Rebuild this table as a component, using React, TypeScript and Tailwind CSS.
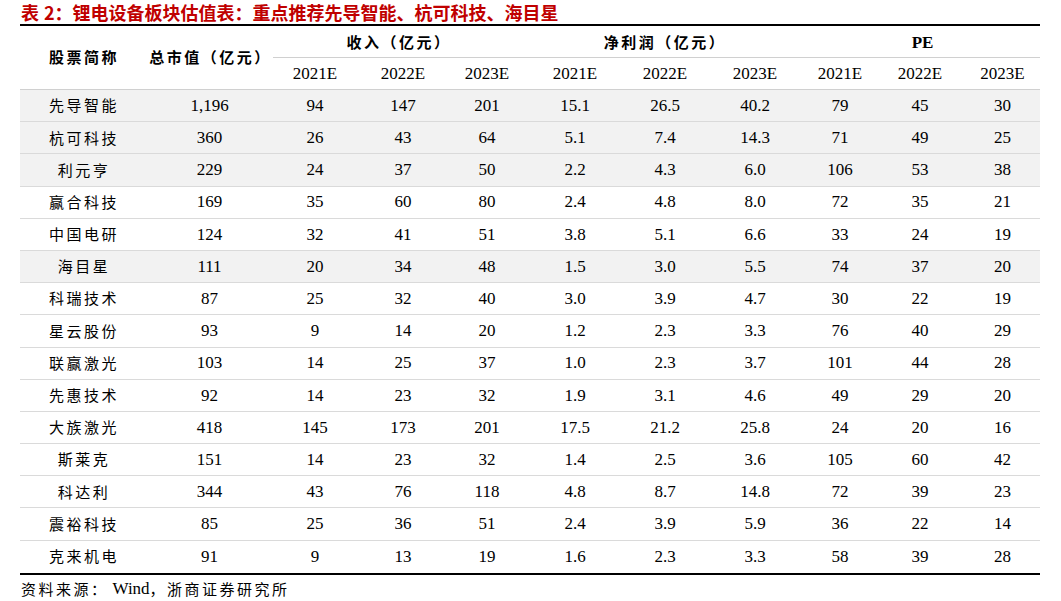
import React from "react";

const rows: string[][] = [
  ["先导智能", "1,196", "94", "147", "201", "15.1", "26.5", "40.2", "79", "45", "30"],
  ["杭可科技", "360", "26", "43", "64", "5.1", "7.4", "14.3", "71", "49", "25"],
  ["利元亨", "229", "24", "37", "50", "2.2", "4.3", "6.0", "106", "53", "38"],
  ["赢合科技", "169", "35", "60", "80", "2.4", "4.8", "8.0", "72", "35", "21"],
  ["中国电研", "124", "32", "41", "51", "3.8", "5.1", "6.6", "33", "24", "19"],
  ["海目星", "111", "20", "34", "48", "1.5", "3.0", "5.5", "74", "37", "20"],
  ["科瑞技术", "87", "25", "32", "40", "3.0", "3.9", "4.7", "30", "22", "19"],
  ["星云股份", "93", "9", "14", "20", "1.2", "2.3", "3.3", "76", "40", "29"],
  ["联赢激光", "103", "14", "25", "37", "1.0", "2.3", "3.7", "101", "44", "28"],
  ["先惠技术", "92", "14", "23", "32", "1.9", "3.1", "4.6", "49", "29", "20"],
  ["大族激光", "418", "145", "173", "201", "17.5", "21.2", "25.8", "24", "20", "16"],
  ["斯莱克", "151", "14", "23", "32", "1.4", "2.5", "3.6", "105", "60", "42"],
  ["科达利", "344", "43", "76", "118", "4.8", "8.7", "14.8", "72", "39", "23"],
  ["震裕科技", "85", "25", "36", "51", "2.4", "3.9", "5.9", "36", "22", "14"],
  ["克来机电", "91", "9", "13", "19", "1.6", "2.3", "3.3", "58", "39", "28"],
];

const highlighted = new Set([0, 1, 2, 5]);

const cjk = "font-['Noto_Sans_CJK_SC',sans-serif]";
const serif = "font-['Liberation_Serif','Noto_Sans_CJK_SC',serif]";
const cols =
  "grid grid-cols-[126px_127px_84px_92px_76px_100px_80px_100px_70px_90px_75px]";

export default function App() {
  return (
    <div className="w-[1061px] h-[601px] bg-white text-black overflow-hidden">
      <div
        className={`h-[24px] pl-[21px] flex items-center text-[18px] font-bold leading-none text-[#c00000] ${cjk}`}
      >
        表<span className="inline-block w-[5px]" />2：锂电设备板块估值表：重点推荐先导智能、杭可科技、海目星
      </div>
      <div className="ml-[20px] w-[1020px]">
        {/* header */}
        <div
          className={`${cols} grid-rows-[32px_31px] border-t-2 border-black border-b border-b-[#d0d0d0]`}
        >
          <div
            className={`row-span-2 flex items-center justify-center text-[15px] font-semibold tracking-[2.5px] pl-[2px] ${cjk}`}
          >
            股票简称
          </div>
          <div
            className={`row-span-2 flex items-center justify-center text-[15px] font-semibold tracking-[2.5px] pl-[2px] ${cjk}`}
          >
            总市值（亿元）
          </div>
          <div
            className={`col-span-3 flex items-center justify-center border-b border-[#d0d0d0] text-[15px] font-semibold tracking-[2.5px] pt-[2px] ${cjk}`}
          >
            收入（亿元）
          </div>
          <div
            className={`col-span-3 flex items-center justify-center border-b border-[#d0d0d0] text-[15px] font-semibold tracking-[2.5px] pt-[2px] ${cjk}`}
          >
            净利润（亿元）
          </div>
          <div
            className={`col-span-3 flex items-center justify-center border-b border-[#d0d0d0] text-[17px] font-bold pt-[2px] ${serif}`}
          >
            PE
          </div>
          {["2021E", "2022E", "2023E", "2021E", "2022E", "2023E", "2021E", "2022E", "2023E"].map(
            (y, i) => (
              <div
                key={i}
                className={`flex items-center justify-center pt-[1px] text-[17px] ${serif}`}
              >
                {y}
              </div>
            )
          )}
        </div>
        {/* body */}
        <div className="border-b-2 border-black">
          {rows.map((r, ri) => (
            <div
              key={ri}
              className={`${cols} h-[32.2px] ${
                ri < rows.length - 1 ? "border-b border-[#dadada]" : ""
              } ${highlighted.has(ri) ? "bg-[#f2f2f2]" : "bg-white"}`}
            >
              {r.map((c, ci) => (
                <div
                  key={ci}
                  className={`flex items-center justify-center ${
                    ci === 0
                      ? `text-[15px] tracking-[2.5px] pl-[2px] ${cjk}`
                      : `text-[17px] ${serif}`
                  }`}
                >
                  {c}
                </div>
              ))}
            </div>
          ))}
        </div>
      </div>
      <div className={`pl-[21px] h-[28px] flex items-center text-[15px] tracking-[2.5px] ${cjk}`}>
        资料来源：<span className="inline-block w-[4px]" />
        <span className={`${serif} text-[17px] tracking-normal`}>Wind</span>，浙商证券研究所
      </div>
    </div>
  );
}
